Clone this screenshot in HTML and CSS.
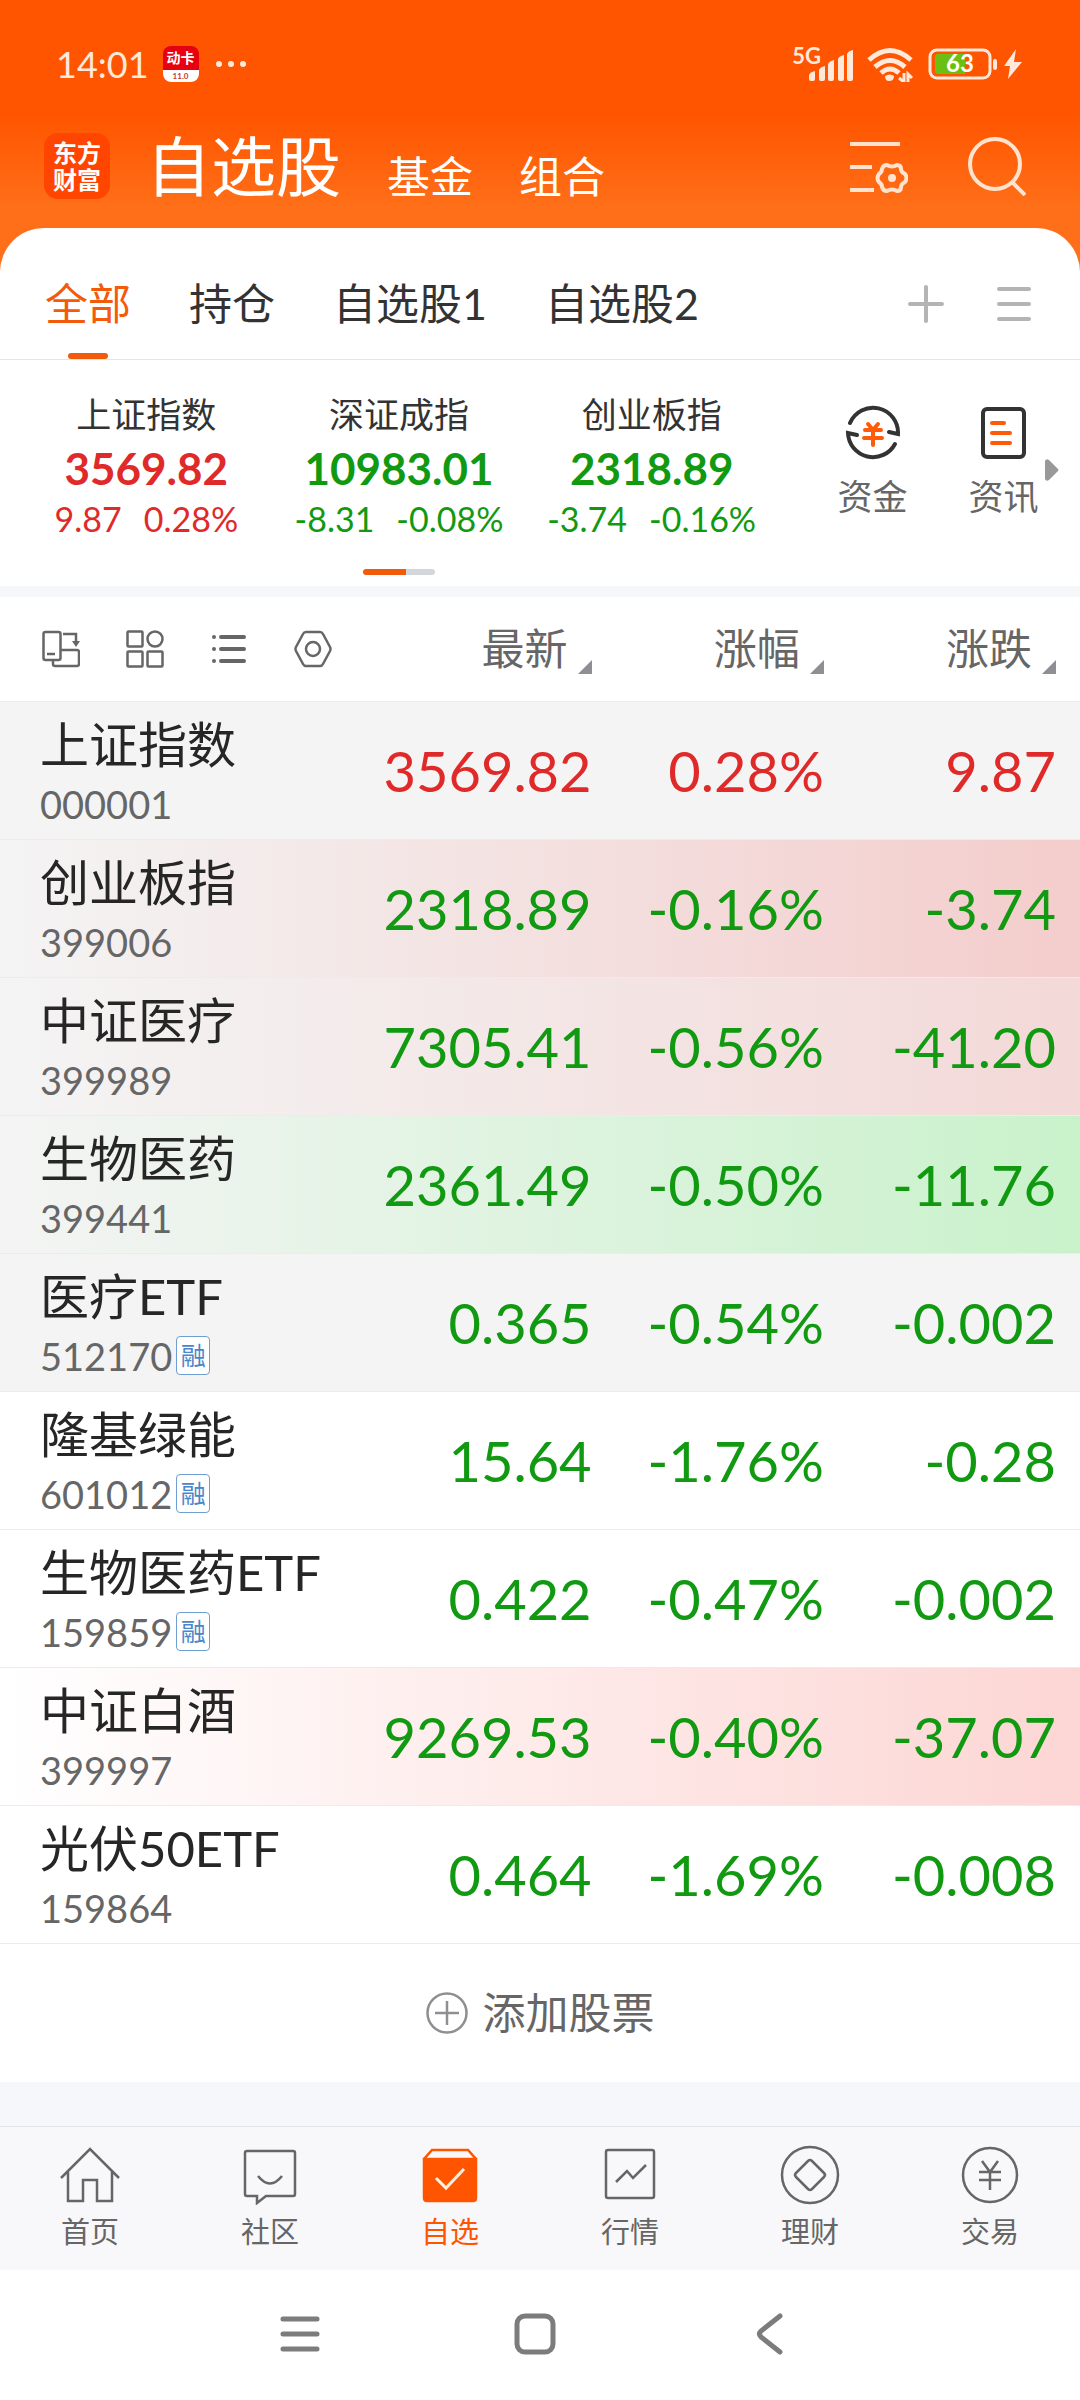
FILE: index.html
```html
<!DOCTYPE html>
<html lang="zh-CN">
  <head>
    <meta charset="utf-8" />
    <meta name="viewport" content="width=device-width" />
    <title>自选股</title>

    <link rel="stylesheet" href="styles.css">
  </head>

  <body>
    <header class="top">
      <div class="status">
        <span class="time">14:01</span>
        <span class="app-badge"><b>动卡</b><i>11.0</i></span>
        <svg class="dots" width="28" height="8" viewBox="0 0 28 8" fill="currentColor">
          <circle cx="4" cy="4" r="3" />
          <circle cx="16" cy="4" r="3" />
          <circle cx="28" cy="4" r="3" />
        </svg>
        <span class="status-right">
          <span class="network">5G</span>
          <svg class="signal" width="45" height="36" viewBox="0 0 45 36" fill="currentColor">
            <path d="M0 33v-4q1-3 6-4v8q0 2-2 2H2q-2 0-2-2z" />
            <path d="M10 33v-9q1-3 6-4v13q0 2-2 2h-2q-2 0-2-2z" />
            <path d="M19 33V18q1-3 6-4v19q0 2-2 2h-2q-2 0-2-2z" />
            <path d="M29 33V13q1-3 6-4v24q0 2-2 2h-2q-2 0-2-2z" />
            <path d="M38 33V8q1-3 6-4v29q0 2-2 2h-2q-2 0-2-2z" />
          </svg>
          <svg class="wifi" width="48" height="36" viewBox="0 0 48 36" fill="none" stroke="currentColor" stroke-width="5">
            <path d="M3 14Q24-5 45 14" />
            <path d="M9 21q15-13 30 0" />
            <path d="M15 27q9-8 18 0" />
            <path d="M19 30q5-3 9 0 0 5-5 5-4 0-4-5z" fill="currentColor" stroke="none" />
            <path d="M38 27v9l-5-4M42 36v-8l4 4" stroke-width="3" />
          </svg>
          <svg class="battery" width="96" height="32" viewBox="0 0 96 32">
            <rect x="2" y="2" width="60" height="28" rx="7" fill="none" stroke="currentColor" stroke-width="3" />
            <path d="M10 6h27v20H10q-3 0-3-3V9q0-3 3-3z" fill="#6abf12" />
            <rect x="65" y="11" width="4" height="11" rx="2" fill="currentColor" />
            <text x="32" y="24" text-anchor="middle">63</text>
            <path d="M88 1 76 18h6l-2 13 14-17h-8z" fill="currentColor" />
          </svg>
        </span>
      </div>

      <div class="title-bar">
        <a class="logo" href="#">东方<br />财富</a>
        <nav class="sections">
          <a class="section active" href="#">自选股</a>
          <a class="section" href="#">基金</a>
          <a class="section" href="#">组合</a>
        </nav>
        <button class="icon-button" aria-label="设置">
          <svg width="58" height="58" viewBox="0 0 58 58" fill="none" stroke="currentColor" stroke-width="4">
            <path d="M0 7h50M0 30h22M0 53h24" />
            <path d="M37 28q5 3 10 0 4 0 4 4 0 3 4 5 3 4 0 8-4 2-4 5 0 4-4 4-5-3-10 0-4 0-5-4 0-3-3-5-3-4 0-8 3-2 3-5 1-4 5-4z" />
            <circle cx="42" cy="41" r="4" fill="currentColor" stroke="none" />
          </svg>
        </button>
        <button class="icon-button" aria-label="搜索">
          <svg width="58" height="60" viewBox="0 0 58 60" fill="none" stroke="currentColor" stroke-width="4">
            <circle cx="27" cy="28" r="25" />
            <path d="m44 46 13 13" />
          </svg>
        </button>
      </div>
    </header>

    <main>
      <div class="card">
        <nav class="groups">
          <a class="group active" href="#">全部</a>
          <a class="group" href="#">持仓</a>
          <a class="group" href="#">自选股1</a>
          <a class="group" href="#">自选股2</a>
          <span class="group-buttons">
            <button aria-label="添加分组">
              <svg width="36" height="38" viewBox="0 0 36 38" stroke="currentColor" stroke-width="4" stroke-linecap="round">
                <path d="M2 19h32M18 2v34" />
              </svg>
            </button>
            <button aria-label="管理分组">
              <svg width="34" height="38" viewBox="0 0 34 38" stroke="currentColor" stroke-width="4" stroke-linecap="round">
                <path d="M2 4h30M2 19h30M2 34h30" />
              </svg>
            </button>
          </span>
        </nav>

        <section class="overview">
          <div class="indices">
            <a class="index up" href="#">
              <span class="index-name">上证指数</span>
              <strong class="index-value">3569.82</strong>
              <span class="index-change"><span>9.87</span><span>0.28%</span></span>
            </a>
            <a class="index down" href="#">
              <span class="index-name">深证成指</span>
              <strong class="index-value">10983.01</strong>
              <span class="index-change"><span>-8.31</span><span>-0.08%</span></span>
            </a>
            <a class="index down" href="#">
              <span class="index-name">创业板指</span>
              <strong class="index-value">2318.89</strong>
              <span class="index-change"><span>-3.74</span><span>-0.16%</span></span>
            </a>
            <div class="pager"></div>
          </div>

          <div class="shortcuts">
            <a class="shortcut" href="#">
              <svg width="56" height="56" viewBox="0 0 56 56" fill="none" stroke="#333" stroke-width="4" stroke-linecap="round">
                <path d="M5 18A25 25 0 0 1 53 29l-9-2" />
                <path d="M50 39A25 25 0 0 1 3 28l9 2" />
                <path d="m23 19 5 6 5-6M20 25h16M19 33h18M28 25v15" stroke="#ff5a0a" />
              </svg>
              资金
            </a>
            <a class="shortcut" href="#">
              <svg width="56" height="56" viewBox="0 0 56 56" fill="none" stroke="#333" stroke-width="4" stroke-linecap="round">
                <rect x="7" y="4" width="41" height="48" rx="4" />
                <path d="M16 18h12M16 28h18M16 38h18" stroke="#ff5a0a" />
              </svg>
              资讯
            </a>
            <svg class="more" width="14" height="24" viewBox="0 0 14 24" fill="#999">
              <path d="M0 3q1-3 4-1l9 9q1 1 0 2l-9 9q-3 2-4-1z" />
            </svg>
          </div>
        </section>
      </div>

      <table class="quotes">
        <colgroup>
          <col class="col-name" />
          <col class="col-price" />
          <col class="col-change" />
          <col class="col-change" />
        </colgroup>
        <thead>
          <tr>
            <th>
              <div class="tools">
                <button aria-label="横屏">
                  <svg width="38" height="38" viewBox="0 0 38 38" fill="none" stroke="currentColor" stroke-width="2.5">
                    <rect x="1.5" y="2" width="17" height="28" rx="2" />
                    <path d="M18 20h17q2 0 2 2v12q0 2-2 2H13q-2 0-2-2v-4M5 24h8M21 4h13v8" />
                    <path d="M30 11h8l-4 6z" fill="currentColor" stroke="none" />
                  </svg>
                </button>
                <button aria-label="宫格">
                  <svg width="38" height="38" viewBox="0 0 38 38" fill="none" stroke="currentColor" stroke-width="2.5">
                    <rect x="1.5" y="1.5" width="15" height="15" rx="1" />
                    <circle cx="29" cy="9" r="7.5" />
                    <rect x="1.5" y="21.5" width="15" height="15" rx="1" />
                    <rect x="21.5" y="21.5" width="15" height="15" rx="1" />
                  </svg>
                </button>
                <button aria-label="列表">
                  <svg width="38" height="38" viewBox="0 0 38 38" stroke="currentColor" stroke-width="4" stroke-linecap="round">
                    <path d="M4 7h0M4 19h0M4 31h0M11 7h23M11 19h23M11 31h23" />
                  </svg>
                </button>
                <button aria-label="设置">
                  <svg width="38" height="38" viewBox="0 0 38 38" fill="none" stroke="currentColor" stroke-width="2.5">
                    <path d="M12 2h14q2 0 3 2l7 13q1 2 0 4l-7 13q-1 2-3 2H12q-2 0-3-2L2 21q-1-2 0-4L9 4q1-2 3-2z" />
                    <circle cx="19" cy="19" r="7" />
                  </svg>
                </button>
              </div>
            </th>
            <th><button class="sort">最新</button></th>
            <th><button class="sort">涨幅</button></th>
            <th><button class="sort">涨跌</button></th>
          </tr>
        </thead>
        <tbody>
          <tr class="pinned up">
            <td><span class="name">上证指数</span><span class="code">000001</span></td>
            <td>3569.82</td>
            <td>0.28%</td>
            <td>9.87</td>
          </tr>
          <tr class="pinned down flash-red">
            <td><span class="name">创业板指</span><span class="code">399006</span></td>
            <td>2318.89</td>
            <td>-0.16%</td>
            <td>-3.74</td>
          </tr>
          <tr class="pinned down flash-red-soft">
            <td><span class="name">中证医疗</span><span class="code">399989</span></td>
            <td>7305.41</td>
            <td>-0.56%</td>
            <td>-41.20</td>
          </tr>
          <tr class="pinned down flash-green">
            <td><span class="name">生物医药</span><span class="code">399441</span></td>
            <td>2361.49</td>
            <td>-0.50%</td>
            <td>-11.76</td>
          </tr>
          <tr class="pinned down">
            <td><span class="name">医疗ETF</span><span class="code">512170<em class="margin">融</em></span></td>
            <td>0.365</td>
            <td>-0.54%</td>
            <td>-0.002</td>
          </tr>
          <tr class="down">
            <td><span class="name">隆基绿能</span><span class="code">601012<em class="margin">融</em></span></td>
            <td>15.64</td>
            <td>-1.76%</td>
            <td>-0.28</td>
          </tr>
          <tr class="down">
            <td><span class="name">生物医药ETF</span><span class="code">159859<em class="margin">融</em></span></td>
            <td>0.422</td>
            <td>-0.47%</td>
            <td>-0.002</td>
          </tr>
          <tr class="down flash-pink">
            <td><span class="name">中证白酒</span><span class="code">399997</span></td>
            <td>9269.53</td>
            <td>-0.40%</td>
            <td>-37.07</td>
          </tr>
          <tr class="down">
            <td><span class="name">光伏50ETF</span><span class="code">159864</span></td>
            <td>0.464</td>
            <td>-1.69%</td>
            <td>-0.008</td>
          </tr>
        </tbody>
      </table>

      <button class="add-stock">
        <svg width="42" height="42" viewBox="0 0 42 42" fill="none" stroke="#8e8e93" stroke-width="2.5">
          <circle cx="21" cy="21" r="19.5" />
          <path d="M9 21h24M21 9v24" />
        </svg>
        添加股票
      </button>
    </main>

    <nav class="tab-bar">
      <a class="tab" href="#">
        <svg width="60" height="60" viewBox="0 0 60 60" fill="none" stroke="currentColor" stroke-width="2.5">
          <path d="M1 33 30 4l29 29M8 27v29h15V35h14v21h15V27" />
        </svg>
        首页
      </a>
      <a class="tab" href="#">
        <svg width="60" height="60" viewBox="0 0 60 60" fill="none" stroke="currentColor" stroke-width="2.5">
          <path d="M7 6h46q2 0 2 2v41q0 2-2 2H26l-9 7v-7H7q-2 0-2-2V8q0-2 2-2z" />
          <path d="M18 31q12 15 24 0" />
        </svg>
        社区
      </a>
      <a class="tab active" href="#">
        <svg width="60" height="60" viewBox="0 0 60 60" fill="none" stroke="currentColor" stroke-width="2.5">
          <path d="m4 14 8-9h36l8 9" />
          <path d="M4 14h52v39q0 3-3 3H7q-3 0-3-3z" fill="currentColor" />
          <path d="m16 33 10 10 18-19" stroke="#fff0e0" stroke-width="3" />
        </svg>
        自选
      </a>
      <a class="tab" href="#">
        <svg width="60" height="60" viewBox="0 0 60 60" fill="none" stroke="currentColor" stroke-width="2.5">
          <rect x="6" y="5" width="48" height="48" rx="2" />
          <path d="m16 37 11-11 6 7 13-13" />
        </svg>
        行情
      </a>
      <a class="tab" href="#">
        <svg width="60" height="60" viewBox="0 0 60 60" fill="none" stroke="currentColor" stroke-width="2.5">
          <circle cx="30" cy="30" r="28" />
          <path d="m32 16 12 12q2 2 0 4L32 44q-2 2-4 0L16 32q-2-2 0-4l12-12q2-2 4 0z" />
        </svg>
        理财
      </a>
      <a class="tab" href="#">
        <svg width="60" height="60" viewBox="0 0 60 60" fill="none" stroke="currentColor" stroke-width="2.5">
          <circle cx="30" cy="30" r="27" />
          <path d="m22 16 8 11 8-11M19 27h22M19 35h22M30 27v18" />
        </svg>
        交易
      </a>
    </nav>

    <footer class="system-nav">
      <button aria-label="最近任务">
        <svg width="42" height="42" viewBox="0 0 42 42" stroke="currentColor" stroke-width="5" stroke-linecap="round">
          <path d="M4 6h34M4 21h34M4 36h34" />
        </svg>
      </button>
      <button aria-label="主屏幕">
        <svg width="42" height="42" viewBox="0 0 42 42" fill="none" stroke="currentColor" stroke-width="5">
          <rect x="3" y="3" width="36" height="36" rx="8" />
        </svg>
      </button>
      <button aria-label="返回">
        <svg width="42" height="42" viewBox="0 0 42 42" fill="none" stroke="currentColor" stroke-width="5" stroke-linecap="round">
          <path d="M31 3 12 18q-3 3 0 6l19 15" />
        </svg>
      </button>
    </footer>
  </body>
</html>
```

FILE: styles.css
```css
body {
  margin: 0;
  font-family: Lato, "Noto Sans CJK SC", sans-serif;
  color: #333;
  background: #fff;
}

a {
  color: inherit;
  text-decoration: none;
}

button {
  border: 0;
  padding: 0;
  margin: 0;
  font: inherit;
  color: inherit;
  background: transparent;
}

svg {
  display: block;
  flex: none;
}

.up {
  color: #e02a2a;
}
.down {
  color: #119a11;
}

/* orange header */

.top {
  color: #fff;
  background: linear-gradient(#ff5500 50%, #ff6e18 90%);
}

.status {
  display: flex;
  align-items: center;
  height: 128px;
  padding: 0 56px;
  color: #ffe9da;
}
.time {
  font-size: 36px;
}
.app-badge {
  display: flex;
  flex-direction: column;
  width: 36px;
  height: 36px;
  margin: 0 16px 0 14px;
  border-radius: 8px;
  overflow: hidden;
  text-align: center;
  background: #e60012;
}
.app-badge b {
  font-size: 14px;
  line-height: 24px;
  color: #fff;
}
.app-badge i {
  font-size: 8px;
  font-style: normal;
  font-weight: bold;
  line-height: 12px;
  color: #c0392b;
  background: #fff;
}
.dots {
  overflow: visible;
}
.status-right {
  display: flex;
  align-items: center;
  margin-left: auto;
}
.network {
  align-self: flex-start;
  font-size: 22px;
  font-weight: bold;
  line-height: 20px;
}
.signal {
  margin-left: -12px;
}
.wifi {
  margin: 0 14px 0 12px;
}
.battery text {
  font-size: 24px;
  font-weight: bold;
  fill: #fff;
}

.title-bar {
  display: flex;
  align-items: center;
  height: 76px;
  padding: 0 54px 24px 44px;
}
.logo {
  width: 66px;
  padding: 6px 0;
  border-radius: 14px;
  font-size: 24px;
  font-weight: bold;
  line-height: 27px;
  text-align: center;
  background: #ff4500;
}
.sections {
  display: flex;
  align-items: flex-end;
  gap: 46px;
  flex: 1;
  margin-left: 36px;
}
.section {
  font-size: 43px;
  line-height: 54px;
}
.section.active {
  font-size: 65px;
  line-height: 76px;
}
.icon-button {
  margin-left: 60px;
  color: #ffe3cf;
}

/* white card with tabs and indices */

.card {
  border-radius: 44px 44px 0 0;
  background: #fff;
}
main {
  background: linear-gradient(#ff6e18 100px, #f6f7fa 100px);
}

.groups {
  display: flex;
  align-items: center;
  gap: 58px;
  padding: 20px 49px 0 45px;
  border-bottom: 1px solid #e5e5e5;
}
.group {
  position: relative;
  font-size: 43px;
  line-height: 111px;
}
.group.active {
  color: #f25a0c;
}
.group.active::after {
  content: "";
  position: absolute;
  left: 50%;
  bottom: 0;
  width: 40px;
  height: 6px;
  margin-left: -20px;
  border-radius: 3px;
  background: #f25a0c;
}
.group-buttons {
  display: flex;
  gap: 53px;
  margin-left: auto;
  color: #b4b4b4;
}

.overview {
  display: flex;
  gap: 29px;
  padding: 27px 11px 11px 20px;
}
.indices {
  display: grid;
  grid-template-columns: repeat(3, 1fr);
  flex: 1;
}
.index {
  display: flex;
  flex-direction: column;
  align-items: center;
}
.index-name {
  font-size: 35px;
  line-height: 54px;
  color: #333;
}
.index-value {
  font-size: 44px;
  line-height: 54px;
}
.index-change {
  display: flex;
  gap: 22px;
  font-size: 34px;
  line-height: 48px;
}
.pager {
  grid-column: 1 / -1;
  justify-self: center;
  width: 72px;
  height: 6px;
  margin-top: 26px;
  border-radius: 3px;
  background: linear-gradient(90deg, #f25a0c 60%, #d3d7dc 60%);
}
.shortcuts {
  position: relative;
  display: flex;
}
.shortcut {
  display: flex;
  flex-direction: column;
  align-items: center;
  width: 131px;
  padding-top: 18px;
  font-size: 35px;
  line-height: 70px;
  color: #666;
}
.more {
  position: absolute;
  top: 71px;
  right: 10px;
}

/* quotes */

.quotes {
  width: 100%;
  margin-top: 11px;
  border-collapse: collapse;
  table-layout: fixed;
  background: #fff;
}
.col-name {
  width: 31%;
}
.col-price {
  width: 26%;
}
.quotes tr {
  border-bottom: 1px solid #ececec;
}
.quotes th,
.quotes td {
  padding: 0 24px 0 0;
  font-weight: normal;
  text-align: right;
  white-space: nowrap;
}
.quotes th {
  height: 104px;
  color: #666;
}
.quotes td {
  height: 137px;
  font-size: 56px;
}
.quotes th:first-child,
.quotes td:first-child {
  padding: 0 0 0 40px;
  text-align: left;
}

.tools {
  display: flex;
  gap: 46px;
  padding-left: 2px;
}
.sort {
  font-size: 43px;
  line-height: 60px;
}
.sort::after {
  content: "";
  display: inline-block;
  margin-left: 10px;
  margin-bottom: -9px;
  border-bottom: 14px solid #8e8e93;
  border-left: 14px solid transparent;
}

.name {
  display: block;
  font-size: 49px;
  line-height: 66px;
  color: #262626;
}
.code {
  display: flex;
  align-items: center;
  gap: 4px;
  font-size: 38px;
  line-height: 54px;
  color: #666;
}
.margin {
  width: 32px;
  border: 1px solid #6f9fd0;
  border-radius: 4px;
  font-size: 25px;
  font-style: normal;
  line-height: 37px;
  text-align: center;
  color: #4a86c8;
  background: #fff;
}

.pinned {
  background: #f4f4f4;
}
.flash-red {
  background: linear-gradient(90deg, #f4f4f4, #f3cdcc);
}
.flash-red-soft {
  background: linear-gradient(90deg, #f4f4f4, #f3d9d8);
}
.flash-green {
  background: linear-gradient(90deg, #f4f4f4, #c9f2cb);
}
.flash-pink {
  background: linear-gradient(90deg, #fff, #fcd6d4);
}

.add-stock {
  display: flex;
  align-items: center;
  justify-content: center;
  gap: 15px;
  width: 100%;
  height: 138px;
  font-size: 43px;
  line-height: 60px;
  color: #666;
  background: #fff;
}

/* bottom bars */

.tab-bar {
  display: flex;
  margin-top: 44px;
  padding: 18px 0 12px;
  border-top: 1px solid #e2e3e6;
  box-shadow: 0 -44px #f6f7fa;
  background: #f8f8fa;
}
.tab {
  display: flex;
  flex: 1;
  flex-direction: column;
  align-items: center;
  font-size: 29px;
  line-height: 53px;
  color: #666;
}
.tab.active {
  color: #ff5500;
}

.system-nav {
  display: flex;
  justify-content: center;
  gap: 193px;
  padding: 43px 10px 45px 0;
  color: #7c7c7c;
}
```
